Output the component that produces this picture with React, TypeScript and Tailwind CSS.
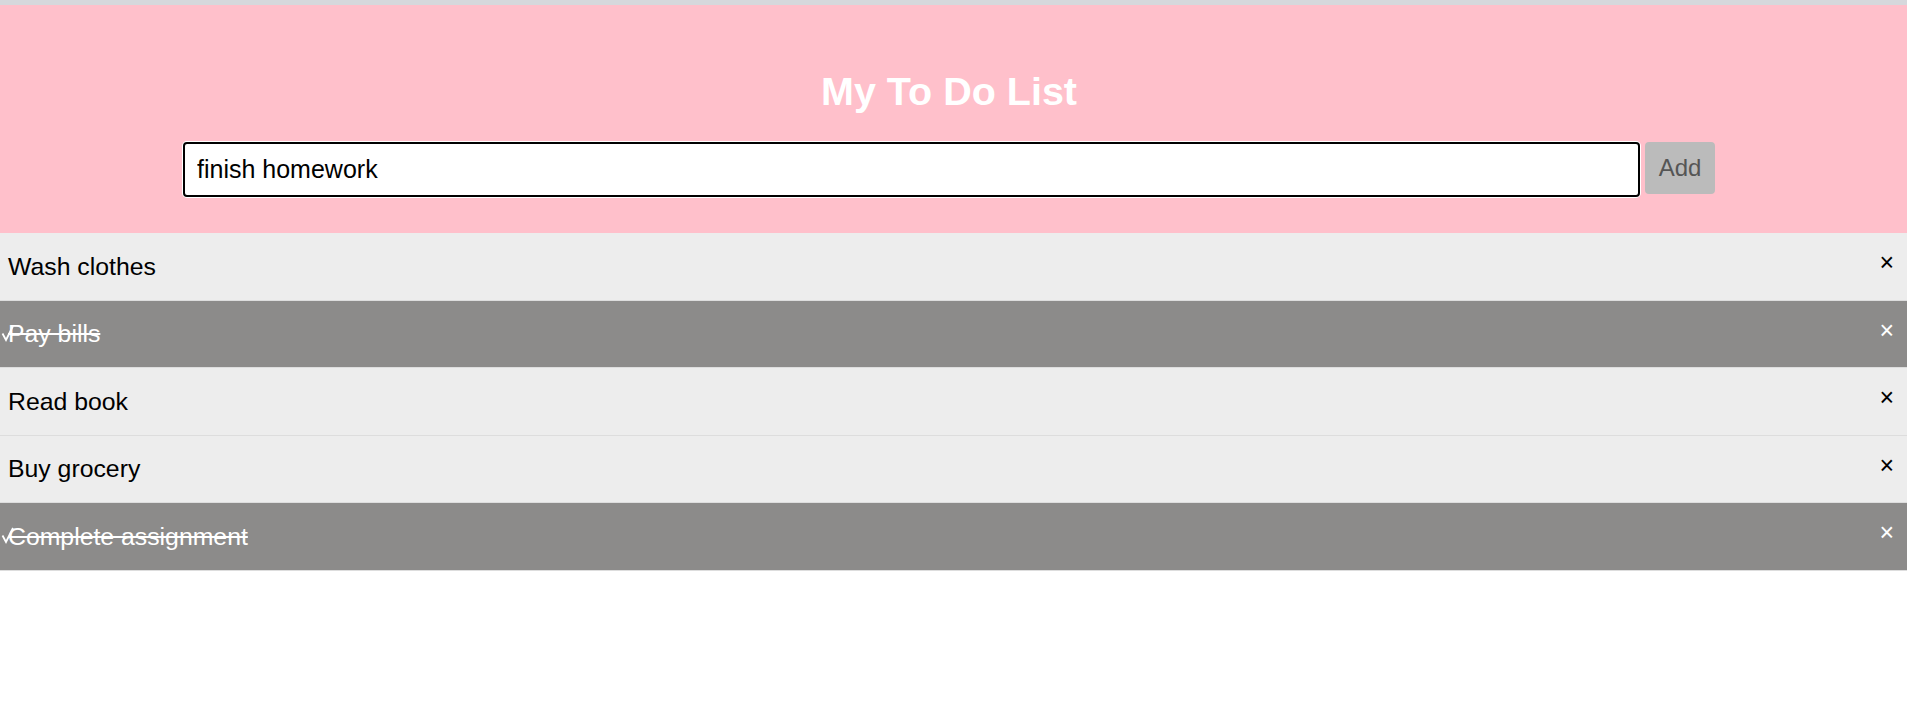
import React from "react";

type Item = { text: string; checked: boolean };

const items: Item[] = [
  { text: "Wash clothes", checked: false },
  { text: "Pay bills", checked: true },
  { text: "Read book", checked: false },
  { text: "Buy grocery", checked: false },
  { text: "Complete assignment", checked: true },
];

export default function App() {
  return (
    <div className="min-h-screen bg-white font-['Liberation_Sans',Arial,sans-serif]">
      <div className="h-[5px] bg-[#d6d8dc]" />
      <div className="bg-[#ffc0cb] pt-[64px] pb-[36px] pl-[183px] pr-[192px]">
        <h2 className="text-center text-white font-bold text-[39.5px] leading-[45px]">
          My To Do List
        </h2>
        <div className="mt-[28px] flex items-start gap-[5px]">
          <input
            type="text"
            defaultValue="finish homework"
            className="h-[55px] min-w-0 flex-1 rounded-[4px] border-2 border-black bg-white px-[12px] text-[25px] text-black shadow-[0_0_0_1px_white] outline-none"
          />
          <button className="h-[52px] w-[70px] rounded-[4px] bg-[#bbbbbb] text-[24px] text-[#555555]">
            Add
          </button>
        </div>
      </div>
      <ul>
        {items.map((it) => (
          <li
            key={it.text}
            className={
              it.checked
                ? "relative flex h-[67.5px] items-start justify-between border-b border-[#dddddd] bg-[#8c8b8a] text-white"
                : "relative flex h-[67.5px] items-start justify-between border-b border-[#dddddd] bg-[#ededed] text-black"
            }
          >
            {it.checked && (
              <svg
                className="absolute left-0 top-[22px]"
                width="16"
                height="20"
                viewBox="0 0 16 20"
                fill="none"
              >
                <polyline
                  points="2.5,10.5 6,17 13,3"
                  stroke="white"
                  strokeWidth="1.8"
                  fill="none"
                />
              </svg>
            )}
            <span
              className={
                it.checked
                  ? "relative pl-[8px] pt-[19.5px] text-[24.8px] leading-[28px] line-through"
                  : "pl-[8px] pt-[19.5px] text-[24.8px] leading-[28px]"
              }
            >
              {it.text}
            </span>
            <span className="pr-[13px] pt-[15px] text-[25px] leading-[28px]">×</span>
          </li>
        ))}
      </ul>
    </div>
  );
}
